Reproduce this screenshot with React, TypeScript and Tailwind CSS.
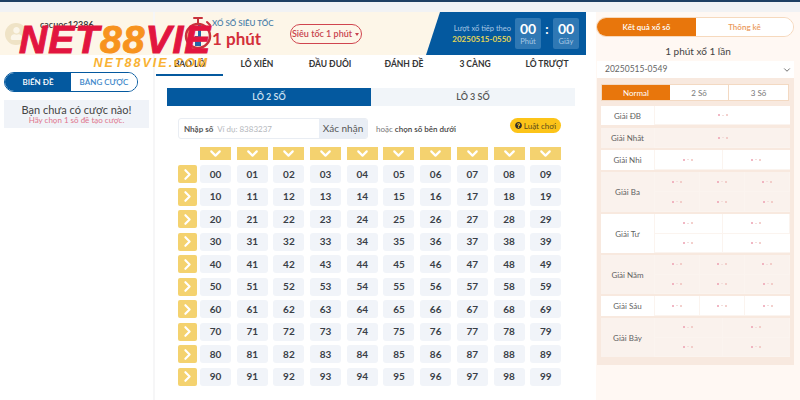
import { ChevronDown, ChevronRight } from "lucide-react";
import { FaQuestionCircle, FaUser } from "react-icons/fa";

const FONT = "font-['Lato','Noto_Sans',sans-serif]";

const TABS = [
  { label: "BAO LÔ", width: "w-[67px]", active: true },
  { label: "LÔ XIÊN", width: "w-[68px]" },
  { label: "ĐẦU ĐUÔI", width: "w-[78px]" },
  { label: "ĐÁNH ĐỀ", width: "w-[70px]" },
  { label: "3 CÀNG", width: "w-[72px]" },
  { label: "LÔ TRƯỢT", width: "w-[72px]" },
];

const PRIZES = [
  { label: "Giải ĐB", height: "h-[19px]", cols: 1, rows: 1, gap: "mb-[3px]", white: true },
  { label: "Giải Nhất", height: "h-[20px]", cols: 1, rows: 1, gap: "mb-[2px]" },
  { label: "Giải Nhì", height: "h-[20px]", cols: 2, rows: 1, gap: "mb-[2px]", white: true },
  { label: "Giải Ba", height: "h-[40px]", cols: 3, rows: 2, gap: "mb-[2px]" },
  { label: "Giải Tư", height: "h-[39px]", cols: 2, rows: 2, gap: "mb-[2px]", white: true },
  { label: "Giải Năm", height: "h-[39px]", cols: 3, rows: 2, gap: "mb-[2px]" },
  { label: "Giải Sáu", height: "h-[20px]", cols: 3, rows: 1, gap: "mb-[2px]", white: true },
  { label: "Giải Bảy", height: "h-[39px]", cols: 2, rows: 2, gap: "" },
];

function Dots() {
  return (
    <span className="flex items-center gap-[2px]">
      <span className="h-[2px] w-[2px] rounded-full bg-[#ec9fb0]" />
      <span className="h-px w-[2px] bg-[#f3dfdc]" />
      <span className="h-[2px] w-[2px] rounded-full bg-[#efc0bd]" />
    </span>
  );
}

function PrizeRow({ prize }: { prize: (typeof PRIZES)[number] }) {
  const cells = Array.from({ length: prize.cols * prize.rows });
  return (
    <div
      className={`flex ${prize.height} ${prize.gap} ${prize.white ? "bg-white" : "bg-[#faf2ed]"}`}
    >
      <div className="flex w-[54px] items-center justify-center border-r border-[#fbf4ef] text-[8px] text-[#5f5f5f]">
        {prize.label}
      </div>
      <div
        className={`grid flex-1 ${prize.cols === 1 ? "grid-cols-1" : prize.cols === 2 ? "grid-cols-2" : "grid-cols-3"}`}
      >
        {cells.map((_, i) => (
          <div
            key={i}
            className="flex items-center justify-center border-r border-b border-[#fbf4ef] last:border-r-0"
          >
            <Dots />
          </div>
        ))}
      </div>
    </div>
  );
}

function Stopwatch() {
  return (
    <svg width="28" height="36" viewBox="0 0 28 36" fill="none" className="shrink-0">
      <path d="M10 2h8M14 2v5M23 6l3 3" stroke="#c8323c" strokeWidth="2" strokeLinecap="round" />
      <circle cx="14" cy="20" r="12" stroke="#c8323c" strokeWidth="2.5" fill="#fdf6e8" />
      <path d="M14 9v11h-3v10h6V9z" fill="#2366a8" />
    </svg>
  );
}

function Logo() {
  return (
    <div className="absolute top-[23px] left-[19px] flex flex-col items-end font-['Liberation_Sans',sans-serif] italic">
      <div className="text-[39px] leading-[33px] font-bold tracking-[1px] whitespace-nowrap text-[#e2153f] [-webkit-text-stroke:1px_#e2153f]">
        NET<span className="text-[#f7931e] [-webkit-text-stroke:1px_#f7931e]">88</span>VIE
      </div>
      <div className="mt-[1px] mr-[2px] text-[12.5px] leading-[13px] font-bold tracking-[2px] whitespace-nowrap text-[#f9b233]">
        NET88VIE.COM
      </div>
    </div>
  );
}

function TimeBox({ unit }: { unit: string }) {
  return (
    <div className="flex h-[31px] w-[26px] flex-col items-center justify-center rounded-[2px] bg-[#2f78b4]">
      <span className="text-[14px] leading-[16px] font-bold text-white">00</span>
      <span className="text-[7.5px] leading-[10px] text-[#a9c8e4]">{unit}</span>
    </div>
  );
}

function Header() {
  return (
    <div className="flex h-[43px] w-full bg-[#fdf6e8]">
      <div className="flex flex-1 items-center pl-[29px]">
        <Stopwatch />
        <div className="flex flex-col">
          <span className="text-[8px] leading-[11px] font-semibold whitespace-nowrap text-[#4a7fa8]">XỔ SỐ SIÊU TỐC</span>
          <span className="text-[17px] leading-[20px] font-bold whitespace-nowrap text-[#d32f3a]">1 phút</span>
        </div>
        <div className="ml-[16px] flex h-[20px] w-[72px] items-center justify-center gap-[3px] rounded-full border border-[#d0454f] text-[9px] font-semibold whitespace-nowrap text-[#c8434d]">
          Siêu tốc 1 phút
          <span className="mt-px border-x-[2px] border-t-[3px] border-x-transparent border-t-[#c8434d]" />
        </div>
      </div>
      <div className="flex w-[160px] shrink-0 items-center justify-end bg-[#04599f] pr-[7px] [clip-path:polygon(14px_0,100%_0,100%_100%,0_100%)]">
        <div className="mr-[4px] flex flex-col items-end whitespace-nowrap">
          <span className="text-[7.5px] leading-[11px] text-[#a9c8e4]">Lượt xổ tiếp theo</span>
          <span className="text-[8px] leading-[11px] font-bold text-[#e5d655]">20250515-0550</span>
        </div>
        <TimeBox unit="Phút" />
        <span className="w-[12px] pb-[8px] text-center text-[13px] font-bold text-white">:</span>
        <TimeBox unit="Giây" />
      </div>
    </div>
  );
}

function NumberGrid() {
  const rows = Array.from({ length: 10 }, (_, r) => r);
  const cols = Array.from({ length: 10 }, (_, c) => c);
  return (
    <div className="mt-[8px] ml-[23px] flex flex-col">
      <div className="mb-[5px] ml-[22px] flex gap-[5.7px]">
        {cols.map((c) => (
          <div key={c} className="flex h-[13px] w-[31px] items-center justify-center bg-[#f4d26f]">
            <ChevronDown size={17} strokeWidth={3} className="text-white" />
          </div>
        ))}
      </div>
      <div className="flex flex-col gap-[4.5px]">
        {rows.map((r) => (
          <div key={r} className="flex h-[18px]">
            <div className="mr-[3px] flex w-[19px] items-center justify-center rounded-[2px] bg-[#f4d26f]">
              <ChevronRight size={17} strokeWidth={3} className="text-white" />
            </div>
            <div className="flex gap-[5.7px]">
              {cols.map((c) => (
                <div
                  key={c}
                  className="flex w-[31px] items-center justify-center rounded-[3px] bg-[#f1f4f9] text-[10px] font-bold text-[#3a3f47]"
                >
                  {r}
                  {c}
                </div>
              ))}
            </div>
          </div>
        ))}
      </div>
    </div>
  );
}

export default function App() {
  return (
    <div className={`relative h-[400px] w-[800px] overflow-hidden bg-white ${FONT}`}>
      <div className="h-[2px] bg-[#1f3f63]" />
      <div className="h-[10px] bg-[#f1f2f4]" />
      <div className="flex h-[388px]">
        <aside className="flex w-[153px] shrink-0 flex-col bg-white">
          <div className="flex h-[43px] items-center bg-[#fdf6e8] pl-[5px]">
            <div className="flex h-[22px] w-[22px] items-center justify-center rounded-full bg-[#efe3c6] text-[#fbf6ea]">
              <FaUser size={13} />
            </div>
            <div className="mb-[17px] ml-[13px] text-[9px] font-semibold text-[#333]">cacuoc12386</div>
          </div>
          <div className="mt-[17px] ml-[4px] flex h-[20px] w-[134px] overflow-hidden rounded-full border border-[#04599f] text-[8px] font-semibold">
            <div className="flex w-[66px] items-center justify-center bg-[#04599f] text-white">BIẾN ĐỀ</div>
            <div className="flex flex-1 items-center justify-center bg-white text-[#3d87c9]">BẢNG CƯỢC</div>
          </div>
          <div className="mt-[8px] ml-[4px] flex h-[28px] w-[145px] flex-col items-center justify-center bg-[#f0f3f8]">
            <span className="text-[11px] leading-[12px] text-[#444]">Bạn chưa có cược nào!</span>
            <span className="text-[8px] leading-[9px] text-[#e0738b]">Hãy chọn 1 số đề tạo cược.</span>
          </div>
        </aside>

        <main className="flex w-[433px] shrink-0 flex-col border-l-2 border-[#f6f6f7] bg-white">
          <Header />
          <nav className="ml-px flex h-[21px] items-end">
            {TABS.map((tab) => (
              <div
                key={tab.label}
                className={`flex h-[21px] items-center justify-center border-b-2 text-[8.5px] font-bold text-[#333] ${tab.width} ${tab.active ? "border-[#04599f]" : "border-transparent"}`}
              >
                {tab.label}
              </div>
            ))}
          </nav>
          <div className="mt-[12px] ml-[12px] flex h-[18px] w-[408px] text-[9px] font-semibold">
            <div className="flex flex-1 items-center justify-center bg-[#04599f] text-[#cfe2f2]">LÔ 2 SỐ</div>
            <div className="flex flex-1 items-center justify-center bg-[#f1f5f9] text-[#555]">LÔ 3 SỐ</div>
          </div>
          <div className="mt-[12px] ml-[23px] flex h-[21px] items-start">
            <div className="flex h-[21px] w-[190px] overflow-hidden rounded-[3px] border border-[#e9edf3] text-[8px]">
              <span className="flex items-center pl-[5px] font-bold text-[#555]">Nhập số</span>
              <span className="flex flex-1 items-center pl-[4px] text-[#b5b8bd]">Ví dụ: 8383237</span>
              <span className="flex w-[48px] items-center justify-center bg-[#e9eef5] text-[10px] text-[#555]">Xác nhận</span>
            </div>
            <span className="mt-[5px] ml-[8px] w-[134px] text-[8px] text-[#777]">
              hoặc <b className="font-semibold text-[#444]">chọn số bên dưới</b>
            </span>
            <span className="flex h-[15px] w-[51px] items-center justify-center gap-[2px] rounded-full bg-[#fcc419] text-[8px] text-[#5a4a1a]">
              <FaQuestionCircle size={7} className="text-[#33302a]" />
              Luật chơi
            </span>
          </div>
          <NumberGrid />
        </main>

        <div className="w-[10px] shrink-0 bg-white" />

        <aside className="flex w-[204px] shrink-0 flex-col bg-[#fff8f3] pt-[5px]">
          <div className="flex h-[20px] w-[198px] overflow-hidden rounded-full border border-[#f6d9bd] text-[8px] font-semibold">
            <div className="flex w-[99px] items-center justify-center bg-[#e8760c] text-white">Kết quả xổ số</div>
            <div className="flex flex-1 items-center justify-center bg-white text-[#eb9a5c]">Thống kê</div>
          </div>
          <div className="mt-[6px] text-center text-[10px] leading-[16px] text-[#444]">1 phút xổ 1 lần</div>
          <div className="mt-[2px] ml-px flex h-[17px] w-[197px] items-center justify-between bg-white pr-[2px] pl-[8px] text-[8.5px] text-[#666]">
            20250515-0549
            <ChevronDown size={10} className="text-[#555]" />
          </div>
          <div className="ml-px h-[287px] w-[197px] bg-[#f8e9df] px-[4px] pt-[6px]">
            <div className="mb-[5px] flex h-[17px] w-[188px] border border-[#f3d9c2] text-[8px]">
              <div className="flex w-[68px] items-center justify-center bg-[#e8760c] text-white">Normal</div>
              <div className="flex w-[59px] items-center justify-center border-r border-[#f3d9c2] bg-white text-[#777]">2 Số</div>
              <div className="flex flex-1 items-center justify-center bg-white text-[#777]">3 Số</div>
            </div>
            {PRIZES.map((prize) => (
              <PrizeRow key={prize.label} prize={prize} />
            ))}
          </div>
        </aside>
      </div>
      <Logo />
    </div>
  );
}
